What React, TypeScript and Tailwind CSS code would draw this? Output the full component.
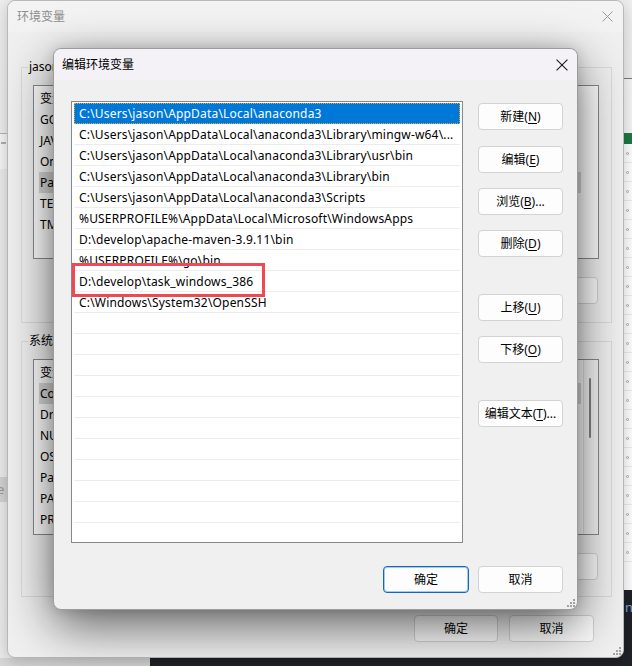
import type { ReactNode } from 'react'

const paths = [
  'C:\\Users\\jason\\AppData\\Local\\anaconda3',
  'C:\\Users\\jason\\AppData\\Local\\anaconda3\\Library\\mingw-w64\\...',
  'C:\\Users\\jason\\AppData\\Local\\anaconda3\\Library\\usr\\bin',
  'C:\\Users\\jason\\AppData\\Local\\anaconda3\\Library\\bin',
  'C:\\Users\\jason\\AppData\\Local\\anaconda3\\Scripts',
  '%USERPROFILE%\\AppData\\Local\\Microsoft\\WindowsApps',
  'D:\\develop\\apache-maven-3.9.11\\bin',
  '%USERPROFILE%\\go\\bin',
  'D:\\develop\\task_windows_386',
  'C:\\Windows\\System32\\OpenSSH',
]

const userVars = ['GOPATH', 'JAVA_HOME', 'OneDrive', 'Path', 'TEMP', 'TMP']
const sysVars = ['ComSpec', 'DriverData', 'NUMBER_OF_PROCESSORS', 'OS', 'Path', 'PATHEXT', 'PROCESSOR_ARCHITECTURE']

function CloseIcon({ color, size = 11 }: { color: string; size?: number }) {
  return (
    <svg width={size} height={size} viewBox="0 0 11 11" fill="none">
      <path d="M0.5 0.5L10.5 10.5M10.5 0.5L0.5 10.5" stroke={color} strokeWidth="1" />
    </svg>
  )
}

function Grip() {
  return (
    <svg width="9" height="9" viewBox="0 0 9 9" fill="#a3a3a3">
      <rect x="7" y="1" width="2" height="2" />
      <rect x="4" y="4" width="2" height="2" />
      <rect x="7" y="4" width="2" height="2" />
      <rect x="1" y="7" width="2" height="2" />
      <rect x="4" y="7" width="2" height="2" />
      <rect x="7" y="7" width="2" height="2" />
    </svg>
  )
}

function WinButton({
  children,
  primary = false,
  w = 'w-[85px]',
  className = '',
}: {
  children: ReactNode
  primary?: boolean
  w?: string
  className?: string
}) {
  return (
    <div
      className={`flex h-[27px] ${w} shrink-0 items-center justify-center rounded-[4px] border bg-[#fdfdfd] text-[12px] text-black ${
        primary
          ? 'border-[#1567be] shadow-[inset_0_0_0_1px_rgba(0,103,192,0.35)]'
          : 'border-[#d2d2d2]'
      } ${className}`}
    >
      {children}
    </div>
  )
}

function Mn({ children }: { children: ReactNode }) {
  return <span className="underline underline-offset-[2px]">{children}</span>
}

function GroupBox({
  label,
  vars,
  listH,
  selected,
  scroll = false,
}: {
  label: string
  vars: string[]
  listH: string
  selected: number
  scroll?: boolean
}) {
  return (
    <div className="relative h-[256px] border border-[#dadada]">
      <span className="absolute -top-[10px] left-[6px] bg-[#f0f0f0] px-px text-[12px] leading-[18px] text-black">
        {label}
      </span>
      <div className={`ml-[11px] mr-[12px] mt-[17px] flex ${listH} border border-[#868a91] bg-white`}>
        <div className="flex-1 overflow-hidden px-[5px] pt-[2px] text-[12px] leading-[21px]">
          <div className="flex h-[21px] pl-[1px]">
            <span className="w-[120px]">变量</span>
            <span>值</span>
          </div>
          {vars.map((v, i) => (
            <div
              key={v}
              className={`h-[21px] w-[542px] pl-[1px] ${i === selected ? 'bg-[#d9d9d9]' : ''}`}
            >
              {v}
            </div>
          ))}
        </div>
        {scroll && (
          <div className="relative w-[15px] border-l border-[#e4e4e4] bg-[#f7f7f7]">
            <div className="absolute left-[5px] top-[18px] h-[60px] w-[2px] rounded bg-[#858585]" />
          </div>
        )}
      </div>
      <div className="mt-[18px] flex justify-end gap-[9px] pr-[13px]">
        <WinButton>新建(W)...</WinButton>
        <WinButton>编辑(I)...</WinButton>
        <WinButton>删除(L)</WinButton>
      </div>
    </div>
  )
}

function BackgroundWindow() {
  return (
    <div className="absolute left-[7px] top-0 flex h-[658px] w-[617px] flex-col rounded-[8px] border border-[#b9b9b9] bg-[#f0f0f0] shadow-[0_4px_16px_rgba(0,0,0,0.2)]">
      <div className="flex h-[31px] items-center justify-between rounded-t-[8px] bg-[#f3f3f3] pl-[9px] pr-[10px]">
        <span className="text-[12px] text-[#8e8e8e]">环境变量</span>
        <CloseIcon color="#9c9c9c" />
      </div>
      <div className="pl-[13px] pr-[11px] pt-[35px]">
        <GroupBox label="jason 的用户变量(U)" vars={userVars} listH="h-[174px]" selected={3} />
        <div className="mt-[18px]">
          <GroupBox label="系统变量(S)" vars={sysVars} listH="h-[176px]" selected={0} scroll />
        </div>
        <div className="mt-[18px] flex justify-end gap-[11px] pr-[18px]">
          <WinButton w="w-[84px]">确定</WinButton>
          <WinButton>取消</WinButton>
        </div>
      </div>
      <div className="absolute bottom-[2px] right-[2px]">
        <Grip />
      </div>
    </div>
  )
}

function EditDialog() {
  const emptyRows = Array.from({ length: 12 })
  return (
    <div className="absolute left-[53px] top-[48px] flex h-[562px] w-[525px] flex-col rounded-[8px] border border-[#9c9c9c] bg-[#f0f0f0] shadow-[0_16px_50px_rgba(0,0,0,0.6),0_0_14px_rgba(0,0,0,0.14)]">
      <div className="flex h-[31px] items-center justify-between rounded-t-[8px] bg-[#f4f2f7] pl-[8px] pr-[9px]">
        <span className="text-[12px] text-black">编辑环境变量</span>
        <CloseIcon color="#1a1a1a" size={12} />
      </div>
      <div className="flex pl-[17px] pt-[21px]">
        <div className="relative h-[442px] w-[392px] overflow-hidden border border-[#858990] bg-white px-[2px] pt-px text-[12px] leading-[21px] tracking-[0.18px] text-black">
          {paths.map((p, i) => (
            <div
              key={p}
              className={`h-[21px] overflow-hidden whitespace-nowrap pl-[5px] ${
                i === 0
                  ? 'bg-[#0078d7] text-white outline-1 -outline-offset-1 outline-dotted outline-[#e8a84a]'
                  : 'border-b border-[#ececec]'
              }`}
            >
              {p}
            </div>
          ))}
          {emptyRows.map((_, i) => (
            <div key={i} className="h-[21px] border-b border-[#ececec]" />
          ))}
          <div className="absolute left-0 top-[161px] h-[34px] w-[193px] border-[3px] border-[#ef4a52]" />
        </div>
        <div className="ml-[15px] flex flex-col">
          <WinButton className="mt-[2px]">
            新建(<Mn>N</Mn>)
          </WinButton>
          <WinButton className="mt-[16px]">
            编辑(<Mn>E</Mn>)
          </WinButton>
          <WinButton className="mt-[15px]">
            浏览(<Mn>B</Mn>)...
          </WinButton>
          <WinButton className="mt-[15px]">
            删除(<Mn>D</Mn>)
          </WinButton>
          <WinButton className="mt-[37px]">
            上移(<Mn>U</Mn>)
          </WinButton>
          <WinButton className="mt-[15px]">
            下移(<Mn>O</Mn>)
          </WinButton>
          <WinButton className="mt-[37px]">
            编辑文本(<Mn>T</Mn>)...
          </WinButton>
        </div>
      </div>
      <div className="mt-[23px] flex justify-end gap-[9px] pr-[14px]">
        <WinButton primary w="w-[86px]">
          确定
        </WinButton>
        <WinButton>取消</WinButton>
      </div>
      <div className="absolute bottom-[2px] right-[2px]">
        <Grip />
      </div>
    </div>
  )
}

export default function App() {
  const sheetRows = Array.from({ length: 22 })
  return (
    <div className="relative h-[666px] w-[632px] overflow-hidden bg-[#d8d8d8] [font-family:'Noto_Sans','Noto_Sans_CJK_SC',sans-serif]">
      {/* app peeking out on the left */}
      <div className="absolute left-0 top-0 flex h-[658px] w-[12px] flex-col bg-[#ececec]">
        <div className="h-[133px] bg-[#eeeeee]" />
        <div className="h-[36px] border-t border-[#b5b5b5] bg-[#f6f6f6] pt-[8px]">
          <div className="ml-[1px] h-[2px] w-[5px] bg-[#b0b0b0]" />
        </div>
        <div className="mt-[308px] flex h-[25px] w-[7px] items-center overflow-hidden bg-[#d3d3d3] text-[13px] text-[#9a9a9a]">
          <span className="-ml-[3px]">e</span>
        </div>
      </div>

      {/* spreadsheet peeking out on the right */}
      <div className="absolute left-[618px] top-0 flex h-[600px] w-[14px] flex-col bg-white">
        <div className="h-[79px] border-b border-[#7a7a7a] bg-[#efefef]" />
        <div className="h-[54px] bg-[#f6f6f6]" />
        <div className="h-[11px] bg-[#1d7a44]" />
        {sheetRows.map((_, i) => (
          <div key={i} className="flex h-[19px] items-center border-b border-[#ededed] pl-[8px]">
            <div className="h-[3px] w-[3px] rounded-full border border-[#a9a9a9]" />
          </div>
        ))}
      </div>

      {/* dark editor window at the bottom */}
      <div className="absolute left-[150px] top-[590px] h-[90px] w-[500px] overflow-hidden bg-[#1f2328]">
        <span className="absolute left-[475px] top-[8px] text-[13px] text-[#7aa7d6]">ne</span>
      </div>

      <BackgroundWindow />
      <EditDialog />
    </div>
  )
}
